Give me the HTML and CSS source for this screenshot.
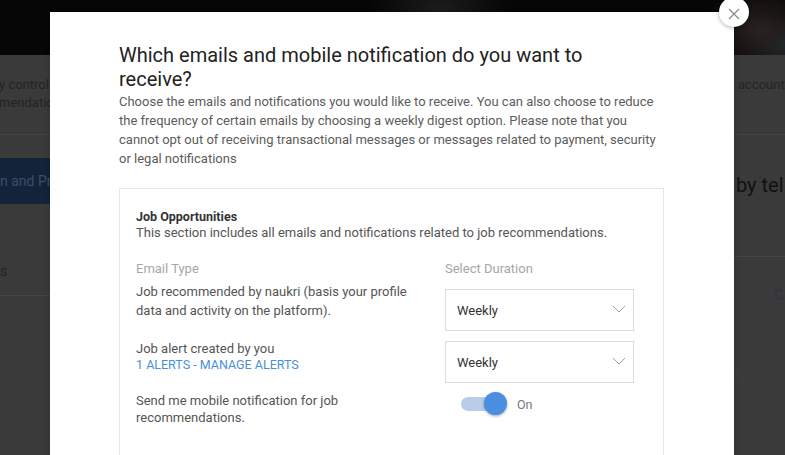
FILE: index.html
```html
<!DOCTYPE html>
<html lang="en">
<head>
<meta charset="utf-8">
<title>Communication preferences</title>
<link rel="stylesheet" href="styles.css">
</head>
<body>
<div class="page">
  <div class="banner"></div>
  <div class="intro">
    <p class="intro-left">y control<br>mendatio</p>
    <p class="intro-right">account</p>
  </div>
  <div class="content">
    <aside class="side">
      <div class="side-active">n and Pri</div>
      <div class="side-item">s</div>
    </aside>
    <div class="main-bg">
      <div class="main-head"><span class="main-title">by tel</span></div>
      <div class="main-c">C</div>
      <div class="main-s">s</div>
    </div>
  </div>
</div>

<div class="modal">
  <h1 class="title">Which emails and mobile notification do you want to receive?</h1>
  <p class="desc">Choose the emails and notifications you would like to receive. You can also choose to reduce the frequency of certain emails by choosing a weekly digest option. Please note that you cannot opt out of receiving transactional messages or messages related to payment, security or legal notifications</p>

  <section class="card">
    <h2 class="card-title">Job Opportunities</h2>
    <p class="card-sub">This section includes all emails and notifications related to job recommendations.</p>

    <div class="grid">
      <div class="col-head">Email Type</div>
      <div class="col-head">Select Duration</div>

      <div class="label row1">Job recommended by naukri (basis your profile data and activity on the platform).</div>
      <div class="select first">
        <span>Weekly</span>
        <svg class="chev" width="14" height="8" viewBox="0 0 14 8"><path d="M1 1l6 6 6-6" fill="none" stroke="#a0a0a0" stroke-width="1"/></svg>
      </div>

      <div class="label row2">Job alert created by you<br><a class="link" href="#">1 ALERTS - MANAGE ALERTS</a></div>
      <div class="select second">
        <span>Weekly</span>
        <svg class="chev" width="14" height="8" viewBox="0 0 14 8"><path d="M1 1l6 6 6-6" fill="none" stroke="#a0a0a0" stroke-width="1"/></svg>
      </div>

      <div class="label row3">Send me mobile notification for job recommendations.</div>
      <div class="toggle-wrap">
        <span class="toggle"><span class="knob"></span></span>
        <span class="on">On</span>
      </div>
    </div>
  </section>
</div>

<button class="close" aria-label="Close">
  <svg width="12" height="12" viewBox="0 0 12 12"><path d="M1 1l10 10M11 1L1 11" stroke="#8a8a8a" stroke-width="1.2" fill="none"/></svg>
</button>
</body>
</html>
```

FILE: styles.css
```css
* { box-sizing: border-box; }
html, body {
  margin: 0;
  padding: 0;
  width: 785px;
  height: 455px;
  overflow: hidden;
  font-family: Roboto, "Liberation Sans", Arial, sans-serif;
  background: #3a3a3a;
}

/* ---------- dimmed background page ---------- */
.page {
  width: 785px;
  height: 455px;
  display: flex;
  flex-direction: column;
  background: #3a3a3a;
}
.banner {
  height: 55px;
  flex: none;
  background:
    radial-gradient(ellipse 70px 40px at 440px 10px, #1d1d1d, rgba(0,0,0,0) 100%),
    radial-gradient(ellipse 60px 45px at 760px 30px, #2a2220, rgba(0,0,0,0) 100%),
    radial-gradient(ellipse 40px 30px at 785px 45px, #1c2a30, rgba(0,0,0,0) 100%),
    #060606;
}
.intro {
  height: 80px;
  flex: none;
  display: flex;
  justify-content: space-between;
  border-bottom: 1px solid #444;
}
.intro p {
  margin: 21px 0 0;
  font-size: 13px;
  line-height: 18px;
  color: #242424;
  white-space: nowrap;
}
.intro-left { margin-left: -1px !important; }
.intro-right { width: 47px; }
.content {
  flex: 1;
  display: flex;
  justify-content: space-between;
}
.side {
  width: 50px;
  padding-top: 23px;
}
.side-active {
  height: 46px;
  background: #13233a;
  color: #3c4d66;
  font-size: 14px;
  line-height: 46px;
  white-space: nowrap;
}
.side-item {
  margin-top: 45px;
  height: 47px;
  line-height: 44px;
  font-size: 14px;
  color: #242424;
  border-bottom: 1px solid #454545;
}
.main-bg {
  width: 51px;
}
.main-head {
  height: 122px;
  border-bottom: 1px solid #454545;
  padding-top: 37px;
}
.main-title {
  display: block;
  font-size: 20px;
  line-height: 26px;
  color: #111;
  white-space: nowrap;
  padding-left: 2px;
}
.main-c {
  margin: 30px 0 0 40px;
  font-size: 14px;
  color: #2c3442;
}
.main-s {
  margin: 62px 0 0 -1px;
  font-size: 13px;
  color: #3e3e3e;
}

/* ---------- modal ---------- */
.modal {
  position: absolute;
  left: 50px;
  top: 12px;
  width: 684px;
  height: 480px;
  background: #fff;
  padding: 31px 70px 0 69px;
  box-shadow: 0 0 6px rgba(0,0,0,0.2);
}
.title {
  margin: 0;
  font-size: 20px;
  line-height: 24px;
  font-weight: 400;
  color: #222;
  width: 520px;
}
.desc {
  margin: 1px 0 0;
  font-size: 13px;
  line-height: 19px;
  color: #5c5c5c;
  width: 545px;
}
.card {
  margin-top: 20px;
  width: 545px;
  height: 300px;
  border: 1px solid #e7e7e7;
  padding: 20px 16px 0;
}
.card-title {
  margin: 0;
  font-size: 12.5px;
  line-height: 16px;
  font-weight: 700;
  color: #333;
}
.card-sub {
  margin: 0;
  font-size: 13px;
  line-height: 16px;
  color: #555;
}
.grid {
  margin-top: 19px;
  display: grid;
  grid-template-columns: 309px 189px;
  row-gap: 10px;
}
.col-head {
  font-size: 13px;
  line-height: 17px;
  color: #a6a6a6;
  margin-bottom: -4px;
}
.label {
  font-size: 13px;
  line-height: 17px;
  color: #555;
  padding-right: 20px;
}
.label.row1 { line-height: 19px; margin-top: -1px; }
.label.row2 { line-height: 16px; }
.label.row3 { margin-top: -1px; }
.link {
  color: #4a8fd8;
  text-decoration: none;
  font-size: 12.5px;
}
.select {
  height: 42px;
  border: 1px solid #dcdcdc;
  display: flex;
  align-items: center;
  justify-content: space-between;
  padding: 0 7px 0 11px;
  font-size: 13px;
  color: #333;
}
.select.first { margin-top: 6px; }
.select.second { margin-top: 0; }
.chev { flex: none; margin-top: -2px; }
.toggle-wrap {
  display: flex;
  align-items: center;
  height: 26px;
  margin-top: -2px;
  padding-left: 16px;
}
.toggle {
  position: relative;
  width: 45px;
  height: 14px;
  border-radius: 7px;
  background: #b9cde8;
  flex: none;
}
.knob {
  position: absolute;
  right: -1px;
  top: -5px;
  width: 23px;
  height: 23px;
  border-radius: 50%;
  background: #4a8ee0;
  box-shadow: 0 1px 3px rgba(0,0,0,0.35);
}
.on {
  margin-left: 11px;
  font-size: 12.5px;
  color: #777;
}

/* ---------- close button ---------- */
.close {
  position: absolute;
  left: 719px;
  top: -3px;
  width: 30px;
  height: 30px;
  border-radius: 50%;
  border: none;
  background: #fff;
  box-shadow: 0 1px 4px rgba(0,0,0,0.3);
  display: flex;
  align-items: center;
  justify-content: center;
  padding: 0;
  cursor: pointer;
}
.close svg { margin-top: 3px; }
```
